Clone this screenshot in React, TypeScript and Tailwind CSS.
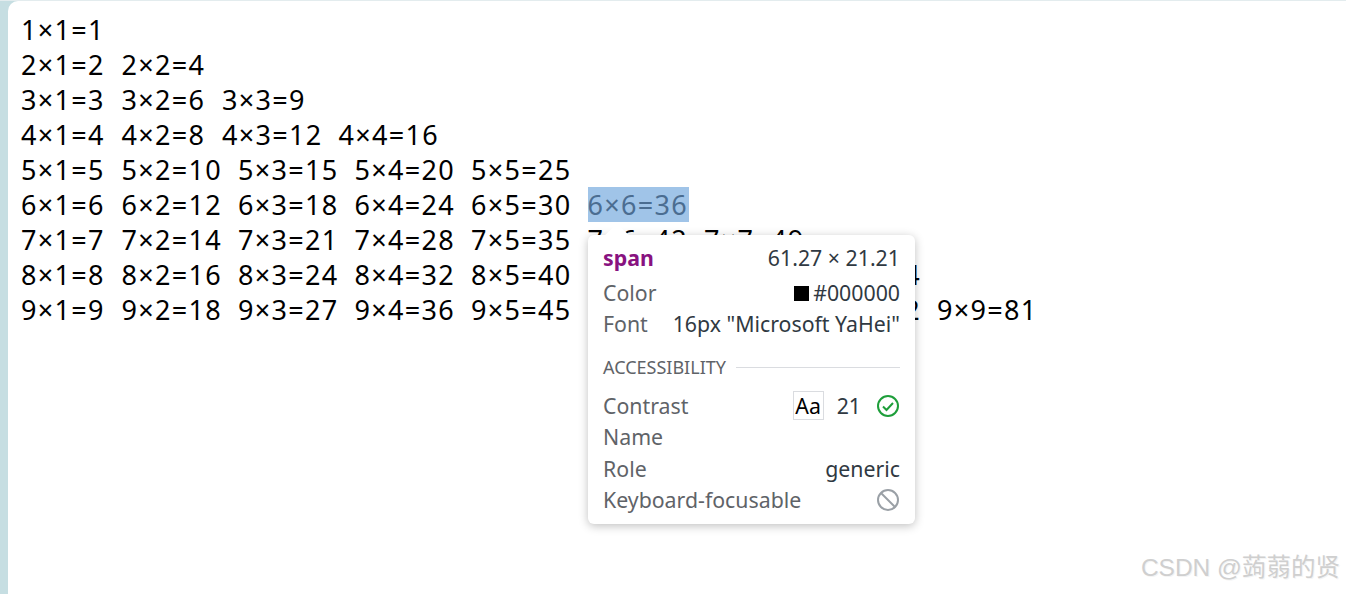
import React from 'react';

const ROWS = [1, 2, 3, 4, 5, 6, 7, 8, 9];

function Cell({ a, b }: { a: number; b: number }) {
  const selected = a === 6 && b === 6;
  const wide = a * b >= 10;
  return (
    <span
      className={`inline-block h-[35px] shrink-0 whitespace-nowrap leading-[35px] tracking-[1.3px] ${
        wide ? 'w-[101px]' : 'w-[85px]'
      } ${selected ? 'bg-[#a0c4e8] text-[#4b6d91]' : 'text-black'}`}
    >
      {a}×{b}={a * b}
    </span>
  );
}

function Inspector() {
  return (
    <div className="absolute left-[580px] top-[234px] w-[327px] h-[289px] rounded-[6px] bg-white px-[15px] pt-[7.5px] shadow-[0_2px_10px_rgba(0,0,0,0.25)] font-['Noto_Sans',sans-serif] text-[21.3px]">
      {/* arrow */}
      <svg className="absolute left-[16px] top-[-11px]" width="26" height="12" viewBox="0 0 26 12">
        <path d="M0 12 L13 0 L26 12 Z" fill="white" />
      </svg>

      <div className="flex h-[31px] items-center justify-between">
        <span className="font-bold text-[#881280]">span</span>
        <span className="text-[#303942]">61.27 × 21.21</span>
      </div>
      <div className="mt-[4px] flex h-[31px] items-center justify-between">
        <span className="text-[#5f6368]">Color</span>
        <span className="flex items-center text-[#303942]">
          <span className="mr-[4px] inline-block h-[15px] w-[15px] bg-black" />
          #000000
        </span>
      </div>
      <div className="flex h-[31px] items-center justify-between">
        <span className="text-[#5f6368]">Font</span>
        <span className="text-[#303942]">16px "Microsoft YaHei"</span>
      </div>

      <div className="mt-[12.5px] flex h-[31px] items-center gap-[10px]">
        <span className="text-[18px] text-[#5f6368]">ACCESSIBILITY</span>
        <div className="h-px flex-1 bg-[#dadce0]" />
      </div>

      <div className="mt-[7px] flex h-[31.5px] items-center justify-between">
        <span className="text-[#5f6368]">Contrast</span>
        <span className="flex items-center">
          <span className="flex h-[29px] w-[31px] items-center justify-center border border-[#dadce0] text-black">Aa</span>
          <span className="ml-[13px] text-[#303942]">21</span>
          <svg className="ml-[15px]" width="24" height="24" viewBox="0 0 24 24">
            <circle cx="12" cy="12" r="10" fill="none" stroke="#1e9e3a" strokeWidth="2" />
            <path d="M7 12.5 L10.5 16 L17 9" fill="none" stroke="#1e9e3a" strokeWidth="2" />
          </svg>
        </span>
      </div>
      <div className="flex h-[31.5px] items-center">
        <span className="text-[#5f6368]">Name</span>
      </div>
      <div className="flex h-[31.5px] items-center justify-between">
        <span className="text-[#5f6368]">Role</span>
        <span className="text-[#303942]">generic</span>
      </div>
      <div className="flex h-[31.5px] items-center justify-between">
        <span className="text-[#5f6368]">Keyboard-focusable</span>
        <svg width="24" height="24" viewBox="0 0 24 24">
          <circle cx="12" cy="12" r="10" fill="none" stroke="#9aa0a6" strokeWidth="2" />
          <path d="M5 5 L19 19" stroke="#9aa0a6" strokeWidth="2" />
        </svg>
      </div>
    </div>
  );
}

export default function App() {
  return (
    <div className="h-[594px] w-full overflow-hidden border-t border-[#e3ecee] bg-[#c6dee2] pl-[8px]">
      <div className="relative h-full rounded-tl-[10px] bg-white pl-[13px] pt-[10.5px] font-['Noto_Sans',sans-serif] text-[27px]">
        {ROWS.map((a) => (
          <div key={a} className="flex h-[35px] items-center gap-[15.5px]">
            {ROWS.filter((b) => b <= a).map((b) => (
              <Cell key={b} a={a} b={b} />
            ))}
          </div>
        ))}

        <Inspector />

        <div className="absolute bottom-[7px] right-[6px] whitespace-nowrap font-['Liberation_Sans','Noto_Sans_CJK_SC',sans-serif] text-[24.5px] text-[#cfcfcf] [text-shadow:1px_1px_0_#f4f4f4]">
          CSDN @蒟蒻的贤
        </div>
      </div>
    </div>
  );
}
